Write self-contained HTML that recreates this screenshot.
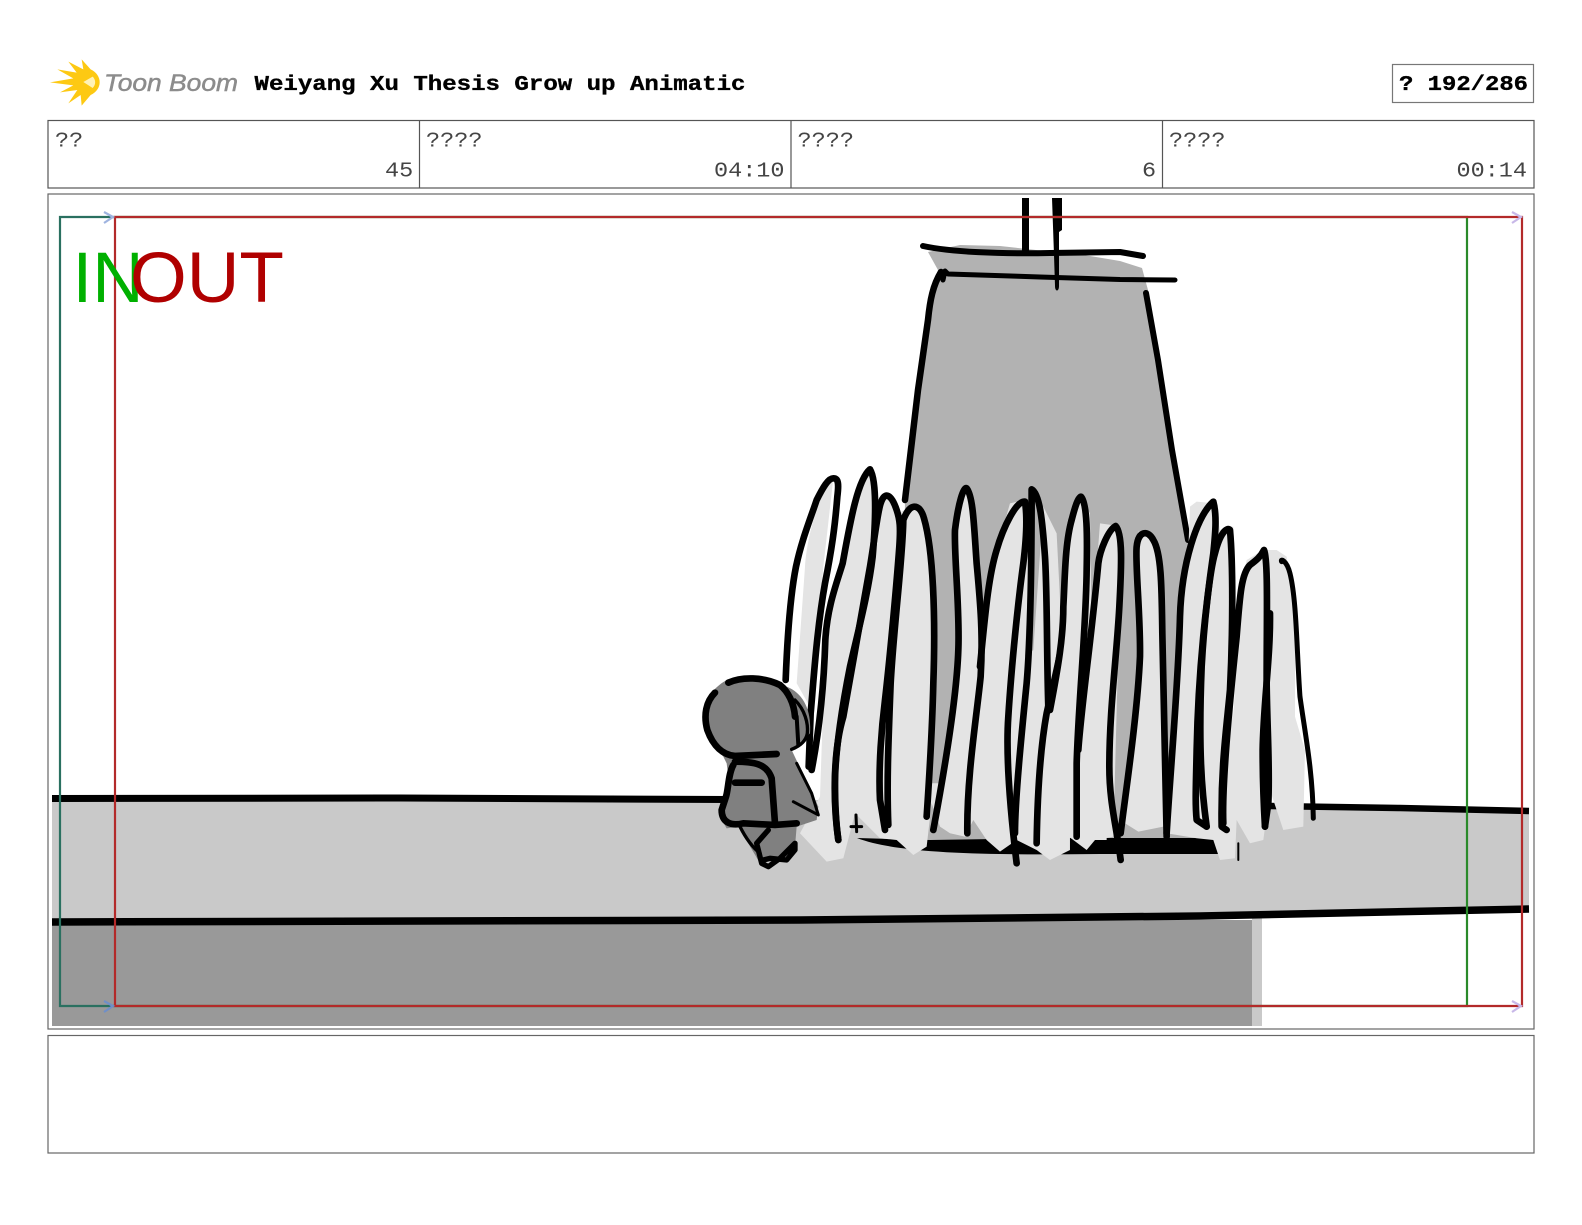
<!DOCTYPE html>
<html><head><meta charset="utf-8"><style>
html,body{margin:0;padding:0;background:#fff;width:1582px;height:1225px;overflow:hidden}
svg{display:block}
.m{font-family:"Liberation Mono",monospace}
.l{font-size:21.500px;fill:#444}
.b{font-size:21px;font-weight:bold;fill:#000;stroke:#000;stroke-width:.35px}
.blk path{fill:none;stroke:#000;stroke-linecap:round;stroke-linejoin:round}
</style></head><body>
<svg width="1582" height="1225" viewBox="0 0 1582 1225" xmlns="http://www.w3.org/2000/svg">
<rect width="1582" height="1225" fill="#fff"/>
<!-- logo -->
<g transform="translate(40,50) scale(.3333)">
<path d="M30,97 L100,85 L52,58 L110,68 L85,35 L130,58 L125,28 L152,58 C188,75 188,118 152,135 L125,167 L122,135 L85,160 L112,120 L60,127 L100,106 Z" fill="#fdc913"/>
<path d="M130,96 L158,80 C168,90 168,104 158,114 Z" fill="#fff2b8"/>
</g>
<text x="104" y="91" font-family="'Liberation Sans',sans-serif" font-style="italic" font-size="24.500" fill="#8c8c8c" stroke="#8c8c8c" stroke-width=".5" textLength="134" lengthAdjust="spacingAndGlyphs">Toon Boom</text>
<text x="254.500" y="90" class="m b" textLength="491" lengthAdjust="spacingAndGlyphs">Weiyang Xu Thesis Grow up Animatic</text>
<rect x="1392.500" y="64.500" width="141" height="38" fill="#fff" stroke="#777" stroke-width="1.200"/>
<text x="1399" y="90" class="m b" textLength="129" lengthAdjust="spacingAndGlyphs">? 192/286</text>
<!-- info row -->
<g fill="none" stroke="#555" stroke-width="1.200">
<rect x="48" y="120.500" width="1486" height="67.500"/>
<path d="M419.500,120.500V188M791,120.500V188M1162.500,120.500V188"/>
</g>
<g class="m l">
<text x="55" y="146.500" textLength="28.200" lengthAdjust="spacingAndGlyphs">??</text>
<text x="426" y="146.500" textLength="56.500" lengthAdjust="spacingAndGlyphs">????</text>
<text x="797.500" y="146.500" textLength="56.500" lengthAdjust="spacingAndGlyphs">????</text>
<text x="1169" y="146.500" textLength="56.500" lengthAdjust="spacingAndGlyphs">????</text>
<text x="385" y="176.500" textLength="28.200" lengthAdjust="spacingAndGlyphs">45</text>
<text x="714" y="176.500" textLength="70.500" lengthAdjust="spacingAndGlyphs">04:10</text>
<text x="1142" y="176.500" textLength="14.100" lengthAdjust="spacingAndGlyphs">6</text>
<text x="1456.500" y="176.500" textLength="70.500" lengthAdjust="spacingAndGlyphs">00:14</text>
</g>
<!-- panels -->
<rect x="48" y="194" width="1486" height="835" fill="#fff" stroke="#666" stroke-width="1.200"/>
<rect x="48" y="1035.500" width="1486" height="117.500" fill="#fff" stroke="#666" stroke-width="1.200"/>
<!-- ground -->
<path d="M52,799 L725,799 L1270,805 L1529,811 L1529,909 L1200,916 L800,920 L52,922 Z" fill="#c9c9c9"/>
<rect x="52" y="920" width="1200" height="106" fill="#999"/>
<path d="M1252,915 H1262 V1026 H1252 Z" fill="#c9c9c9"/>
<path d="M52,922 L800,920 L1200,916 L1529,909" stroke="#000" stroke-width="7.500" fill="none"/>
<path d="M52,798.500 L400,798 L728,799.500" stroke="#000" stroke-width="7" fill="none"/>
<path d="M1270,806 L1400,808 L1529,811" stroke="#000" stroke-width="6.500" fill="none"/>
<g style="filter:blur(.35px)">
<!-- tower -->
<path d="M928,252 L938,270 L932,290 L905,500 L900,842 L1195,842 L1195,560 L1172,450 L1148,290 L1142,268 L1120,261 L1090,256 L1000,246 L960,245 Z" fill="#b2b2b2"/>
<!-- base -->
<path d="M857,838 C900,855 1000,855 1100,854 L1218,854 L1218,838 L1060,838 L930,840 Z" fill="#000"/>
<path d="M1022,198 H1029 V252 H1022 Z" fill="#000"/>
<path d="M1052,198 H1062 L1062,230 L1059,232 L1059,286 C1059,292 1055,292 1055,286 L1054,255 Z" fill="#000"/>
<g class="blk">
<path d="M923,246 C950,252 1000,254 1050,253 L1120,252 L1143,256" stroke-width="6"/>
<path d="M943,280 L945,271 L948,274 L1040,277 L1120,279.500 L1175,280" stroke-width="5"/>
<path d="M941,272 C933,285 930,300 928,320 L918,390 L905,500" stroke-width="6.500"/>
<path d="M1146,293 L1158,360 L1172,450 L1188,540" stroke-width="6"/>
</g>
<!-- blades left -->
<g transform="translate(770,450) scale(.3333)">
<path d="M190,85 C150,120 110,260 105,350 L80,700 L125,780 L160,350 Z" fill="#e4e4e4"/>
<path d="M300,55 C265,90 240,230 210,370 L165,600 L150,1040 L90,1150 L170,1235 L220,1225 L255,1090 L330,1165 L380,1170 L430,1215 L470,1190 L485,1060 L510,1130 L540,1150 L585,1160 L610,1110 L650,1170 L690,1205 L740,1170 L800,1200 L840,1230 L900,1200 L900,700 L880,640 L860,250 L820,170 L790,600 L765,620 L775,380 L765,150 L720,160 L680,300 L640,600 L610,170 L590,110 L560,170 L565,500 L530,860 L500,600 L495,400 C480,260 460,170 430,165 L385,190 C370,150 350,125 340,130 L320,200 Z" fill="#e4e4e4"/>
<path d="M490,1100 L560,800 L625,870 L600,1110 L540,1140 Z" fill="#e4e4e4"/>
<path d="M500,420 L550,420 L560,700 L510,1000 L480,1000 Z" fill="#b2b2b2"/>
<g class="blk" stroke-width="20">
<path d="M47,690 C52,560 62,430 78,350 C95,270 120,210 140,150 C160,110 175,85 190,85 C205,85 207,100 202,140 C195,230 185,300 165,400 C140,540 130,700 122,790 L116,950"/>
<path d="M125,960 C150,830 162,700 166,570 C172,470 200,400 218,340 C240,220 262,90 300,58 C320,90 318,200 308,320 C295,430 265,540 240,650 C220,750 195,900 195,1000 C195,1070 198,1120 205,1170"/>
<path d="M205,1170 C188,1050 190,900 220,800 C240,680 280,470 300,350 C315,260 322,190 332,160 C345,120 365,135 380,180 C390,210 392,230 388,290 C380,400 360,620 345,750 C335,830 325,950 330,1050 L345,1140"/>
<path d="M355,1125 C350,1000 355,880 362,700 C372,520 398,330 400,210 C420,155 450,160 462,205 C490,300 497,500 490,700 C487,830 478,980 470,1100"/>
<path d="M490,1140 C520,980 560,750 565,600 C570,480 552,320 555,240 C565,160 580,110 590,115 C610,140 612,230 620,340 C630,450 640,550 632,680 C620,800 590,980 592,1150"/>
<path d="M630,650 C645,500 655,380 680,300 C700,230 740,150 765,155 C772,200 770,260 760,340 C745,450 725,640 715,800 C708,900 718,1060 740,1240"/>
<path d="M735,1150 C735,1050 755,850 770,700 C782,560 785,300 785,118 C810,130 818,220 825,320 C832,430 830,620 835,770"/>
<path d="M800,1180 C802,1050 810,900 830,790 C850,700 878,600 885,500 C892,400 885,300 905,210"/>
<path d="M258,1095 L260,1145 M243,1130 H275" stroke-width="9"/>
</g>
</g>
<!-- blades right -->
<g transform="translate(1050,450) scale(.3333)">
<path d="M85,135 C60,180 45,260 40,400 C35,500 20,600 0,780 L0,1120 L70,1170 L110,1200 L135,1170 L170,1170 L170,900 L125,550 L120,190 Z" fill="#e4e4e4"/>
<path d="M150,220 L140,350 L115,600 L100,1000 L90,1150 L165,1165 L190,1160 L210,400 L215,250 L185,225 Z" fill="#e4e4e4"/>
<path d="M265,245 C250,280 265,500 270,600 L260,750 L225,1120 L265,1145 L340,1130 L345,1000 L335,380 C320,280 290,240 265,245 Z" fill="#e4e4e4"/>
<path d="M420,170 L415,300 L380,600 L350,1150 L440,1165 L490,1170 L510,1230 L555,1225 L560,1110 L600,1180 L640,1170 L660,1020 L700,1140 L760,1130 L765,900 L735,800 L735,500 L710,320 L680,300 L640,300 L590,330 L570,420 L550,800 L545,650 L550,230 L510,240 L495,160 L440,155 Z" fill="#e4e4e4"/>
<g class="blk" stroke-width="20">
<path d="M0,780 C25,650 40,560 40,470 C45,380 45,280 65,210 C75,170 85,140 93,140 C112,160 112,260 110,360 C108,540 85,760 80,940 L80,1160"/>
<path d="M85,900 C95,760 125,560 145,340 C150,300 175,240 197,228 C218,250 215,340 208,470 C200,620 178,780 178,950 C178,1060 200,1130 212,1230"/>
<path d="M212,1150 C225,1040 262,800 270,620 C272,500 255,340 260,290 C265,240 295,240 310,270 C335,310 335,420 337,550 C340,720 345,900 350,1160"/>
<path d="M350,1150 C362,950 385,700 390,500 C395,340 440,200 490,155 C502,200 495,260 490,310 C470,450 445,650 440,900 C438,1000 435,1060 440,1110 L470,1130"/>
<path d="M470,1130 C455,1020 445,900 455,650 C462,520 480,360 495,310 C510,250 530,230 540,240 C550,350 548,560 540,720 C530,830 512,950 515,1130 L530,1140"/>
<path d="M520,1120 C515,1000 545,700 560,560 C570,430 575,370 600,345 C620,330 632,320 642,300 C655,330 650,500 650,700 C652,850 660,950 655,1060 L645,1130"/>
<path d="M660,490 C662,620 640,760 638,900 C638,1000 642,1080 645,1130"/>
<path d="M695,335 C690,325 710,330 720,370 C740,450 740,600 750,740 C765,850 788,960 790,1105" stroke-width="15"/>
<path d="M565,1180 V1230" stroke-width="6"/>
</g>
</g>
<!-- character -->
<g transform="translate(680,650) scale(.3333)">
<path d="M320,110 C370,130 395,180 390,250 L335,300 L415,470 L410,510 L350,530 L345,590 L290,630 L240,640 L175,530 L140,535 L120,500 L145,380 L140,340 L130,320 L100,290 C50,200 70,130 140,90 C200,70 280,80 320,110 Z" fill="#808080"/>
<g class="blk" stroke-width="20">
<path d="M145,98 C185,80 250,80 300,105 C325,125 342,160 345,200"/>
<path d="M105,128 C78,155 70,195 82,240 C100,290 130,315 165,318 L290,312"/>
<path d="M345,150 C375,180 385,220 382,250 C378,275 355,290 335,298" stroke-width="10"/>
<path d="M350,200 L355,285" stroke-width="12"/>
<path d="M165,335 C220,335 260,340 275,385 L285,520"/>
<path d="M160,345 C145,370 145,420 138,440 L125,480 C125,515 150,530 190,520 L285,525 L350,520"/>
<path d="M165,398 L245,398"/>
<path d="M340,455 L415,495 L395,430 L350,340" stroke-width="9"/>
<path d="M180,530 C195,560 215,590 240,610" stroke-width="10"/>
<path d="M265,540 L230,580 L245,640 L265,650 L300,625 L345,580 L345,600 L320,630 L270,625 L250,630" stroke-width="16"/>
</g>
</g>
</g>
<!-- guides -->
<g fill="none" stroke-width="2.200">
<path d="M115,217 H60 V1006 H115" stroke="#2a7060"/>
<path d="M115,217 H1467 V1006 H115" stroke="#2a8a2a"/>
<path d="M115,217 H1522 V1006 H115 Z" stroke="#b32a2a"/>
<path d="M104,212 L113,217 L104,223" stroke="#9fb4e0"/>
<path d="M104,1001 L113,1006 L104,1012" stroke="#6f8fc8"/>
<path d="M1512,212 L1521,217 L1512,223" stroke="#c8b8e8"/>
<path d="M1512,1001 L1521,1006 L1512,1012" stroke="#c8b8e8"/>
</g>
<text x="72.500" y="302" font-family="'Liberation Sans',sans-serif" font-size="71" fill="#00b000">IN</text>
<text x="130" y="302" font-family="'Liberation Sans',sans-serif" font-size="71" fill="#b00000" textLength="154" lengthAdjust="spacingAndGlyphs">OUT</text>
</svg>
</body></html>
